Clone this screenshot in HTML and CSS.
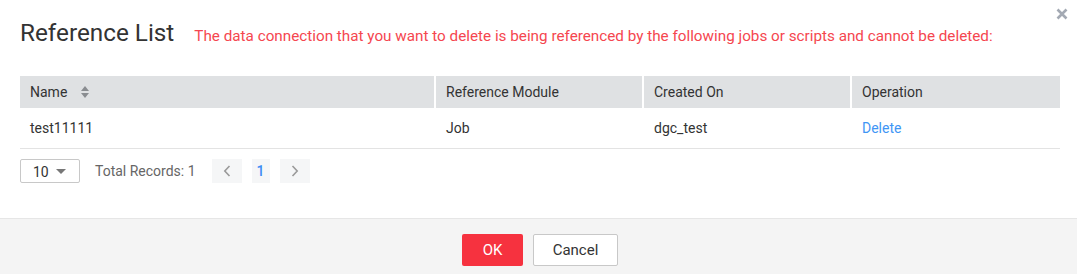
FILE: index.html
```html
<!DOCTYPE html>
<html>
<head>
<meta charset="utf-8">
<link rel="stylesheet" href="styles.css">
</head>
<body>
<div class="dialog">
  <button class="close" aria-label="Close">
    <svg width="12" height="12" viewBox="0 0 12 12"><path d="M1.5 1.5L10.5 10.5M10.5 1.5L1.5 10.5" stroke="#a3a9b3" stroke-width="2.6" stroke-linecap="butt"/></svg>
  </button>
  <div class="content">
    <div class="head">
      <h1 class="title">Reference List</h1>
      <span class="warn">The data connection that you want to delete is being referenced by the following jobs or scripts and cannot be deleted:</span>
    </div>
    <table class="grid">
      <colgroup><col class="c1"><col class="c2"><col class="c3"><col class="c4"></colgroup>
      <thead>
        <tr>
          <th><span class="th-name">Name
            <svg class="sort" width="8" height="12" viewBox="0 0 8 12"><path d="M4 0L8 5H0Z M4 12L0 7H8Z" fill="#8a8d91"/></svg></span></th>
          <th>Reference Module</th>
          <th>Created On</th>
          <th>Operation</th>
        </tr>
      </thead>
      <tbody>
        <tr>
          <td>test11111</td>
          <td>Job</td>
          <td>dgc_test</td>
          <td><a class="link" href="#">Delete</a></td>
        </tr>
      </tbody>
    </table>
    <div class="pager">
      <div class="size">
        <span>10</span>
        <svg width="10" height="5" viewBox="0 0 10 5"><path d="M0 0H10L5 5Z" fill="#777"/></svg>
      </div>
      <span class="total">Total Records: 1</span>
      <div class="pages">
        <span class="pbtn nav"><svg width="8" height="12" viewBox="0 0 8 12"><path d="M6.5 1L1.8 6L6.5 11" fill="none" stroke="#9a9a9a" stroke-width="1.6"/></svg></span>
        <span class="pbtn num">1</span>
        <span class="pbtn nav"><svg width="8" height="12" viewBox="0 0 8 12"><path d="M1.5 1L6.2 6L1.5 11" fill="none" stroke="#9a9a9a" stroke-width="1.6"/></svg></span>
      </div>
    </div>
  </div>
  <div class="footer">
    <button class="btn ok">OK</button>
    <button class="btn cancel">Cancel</button>
  </div>
</div>
</body>
</html>
```

FILE: styles.css
```css
html, body {
  margin: 0;
  padding: 0;
  background: #fff;
}
body {
  font-family: Roboto, "Liberation Sans", Arial, sans-serif;
  color: #333;
  font-size: 14px;
}
.dialog {
  position: relative;
  width: 1077px;
  height: 274px;
  display: flex;
  flex-direction: column;
}
.close {
  position: absolute;
  left: 1056px;
  top: 8px;
  width: 12px;
  height: 12px;
  padding: 0;
  border: 0;
  background: none;
  display: flex;
}
.content {
  height: 218px;
  padding: 0 17px 0 20px;
  box-sizing: border-box;
}
.head {
  display: flex;
  align-items: baseline;
  height: 76px;
  padding-top: 19px;
  box-sizing: border-box;
}
.title {
  margin: 0;
  font-size: 24.3px;
  font-weight: 400;
  line-height: 28px;
  color: #333;
}
.warn {
  margin-left: 20px;
  color: #f5464f;
  font-size: 15.25px;
  white-space: nowrap;
}
.grid {
  width: 1040px;
  border-collapse: collapse;
  table-layout: fixed;
}
.c1 { width: 415px; }
.c2 { width: 208px; }
.c3 { width: 208px; }
.c4 { width: 209px; }
.grid th {
  height: 32px;
  padding: 0 10px;
  background: #dfe1e3;
  text-align: left;
  font-weight: 400;
  color: #333;
  border-left: 2px solid #fff;
}
.grid th:first-child {
  border-left: 0;
}
.th-name {
  display: inline-flex;
  align-items: center;
}
.sort {
  margin-left: 14px;
}
.grid td {
  height: 40px;
  padding: 0 11px;
  border-bottom: 1px solid #e3e3e3;
  color: #333;
}
.grid td:first-child {
  padding-left: 10px;
}
.link {
  color: #3f96f5;
  text-decoration: none;
}
.pager {
  display: flex;
  align-items: center;
  margin-top: 10px;
  height: 24px;
}
.size {
  width: 60px;
  height: 24px;
  box-sizing: border-box;
  border: 1px solid #c8c8c8;
  border-radius: 2px;
  display: flex;
  align-items: center;
  justify-content: space-between;
  padding: 0 13px 0 12px;
  color: #333;
}
.size span {
  padding-top: 1px;
}
.total {
  margin-left: 15px;
  color: #666;
}
.pages {
  display: flex;
  gap: 10px;
  margin-left: 16px;
}
.pbtn {
  height: 24px;
  background: #f5f6f7;
  display: flex;
  align-items: center;
  justify-content: center;
}
.nav {
  width: 30px;
}
.num {
  width: 18px;
  color: #3d8cf5;
  font-weight: 500;
}
.footer {
  flex: 1;
  border-top: 1px solid #e6e6e6;
  background: #f4f4f4;
  display: flex;
  justify-content: center;
  align-items: flex-start;
  gap: 10px;
  padding-top: 15px;
  padding-left: 3px;
}
.btn {
  height: 32px;
  border-radius: 2px;
  font-family: Roboto, "Liberation Sans", Arial, sans-serif;
  font-size: 15px;
  padding: 0;
  cursor: pointer;
}
.ok {
  width: 61px;
  background: #f6323f;
  border: 0;
  color: #fff;
}
.cancel {
  width: 85px;
  background: #fff;
  border: 1px solid #c8c8c8;
  color: #333;
}
```
